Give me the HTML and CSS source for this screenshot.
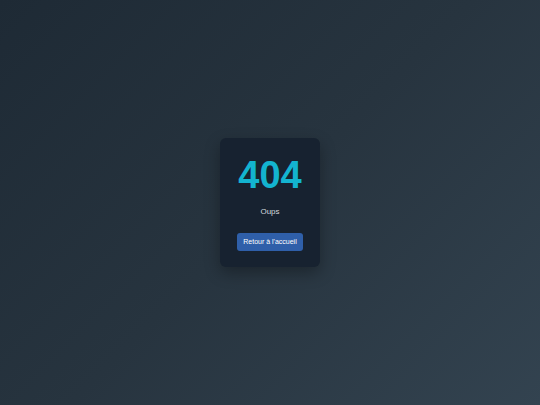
FILE: index.html
```html
<!DOCTYPE html>
<html lang="fr">
<head>
<meta charset="utf-8">
<title>404</title>
<link rel="stylesheet" href="styles.css">
</head>
<body>
<main class="page">
  <div class="card">
    <h1 class="code">404</h1>
    <p class="msg">Oups</p>
    <a class="btn" href="#">Retour à l'accueil</a>
  </div>
</main>
</body>
</html>
```
FILE: styles.css
```css
html, body {
  margin: 0;
  padding: 0;
  height: 100%;
}
body {
  font-family: "Liberation Sans", Arial, sans-serif;
  background: linear-gradient(135deg, #1e2a35 0%, #27343f 50%, #334350 100%);
}
.page {
  height: 100%;
  display: flex;
  align-items: center;
  justify-content: center;
}
.card {
  width: 100px;
  box-sizing: border-box;
  padding: 16px 0;
  background: #172230;
  border-radius: 6px;
  box-shadow: 0 6px 16px rgba(0, 0, 0, 0.3);
  display: flex;
  flex-direction: column;
  align-items: center;
}
.code {
  margin: 0 0 10px;
  font-size: 38px;
  font-weight: 700;
  color: #13b4d0;
}
.msg {
  margin: 0 0 17px;
  font-size: 8px;
  color: #d3d8de;
}
.btn {
  display: inline-block;
  padding: 5px 6px;
  font-size: 7px;
  line-height: 8px;
  color: #ffffff;
  background: #2f5fa9;
  border-radius: 3px;
  text-decoration: none;
}
```
